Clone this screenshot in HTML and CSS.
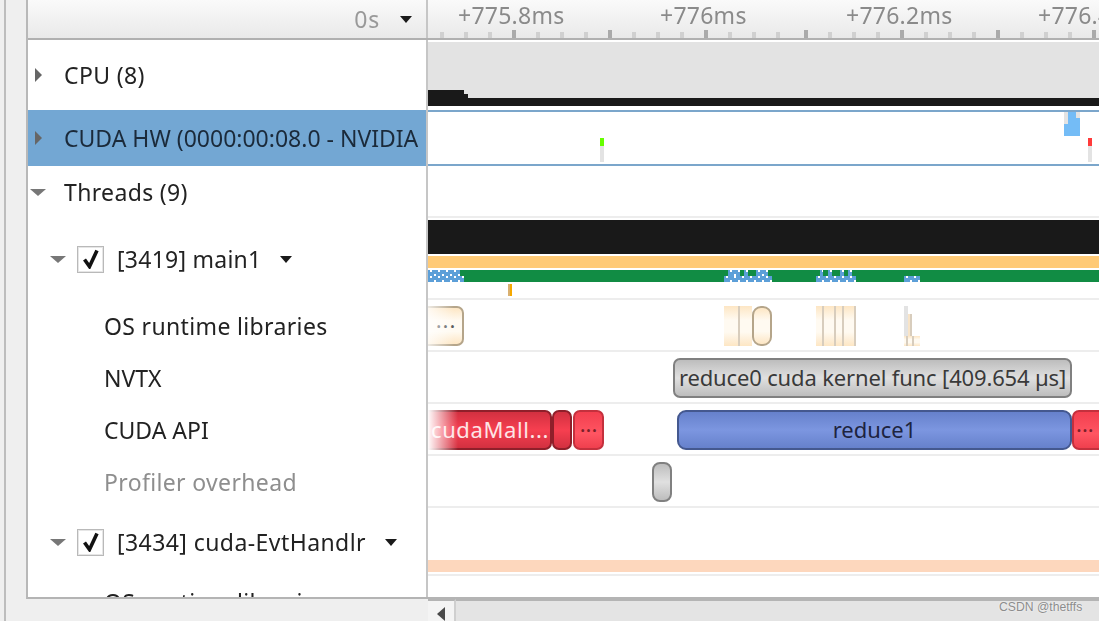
FILE: index.html
```html
<!DOCTYPE html>
<html>
<head>
<meta charset="utf-8">
<title>Timeline</title>
<link rel="stylesheet" href="styles.css">
</head>
<body>
<div class="app">
  <div class="rail"></div>
  <div class="main">
    <div class="panel">
      <div class="row row-head">
        <div class="label label-head"><span class="zero">0s</span><span class="arrow-down arrow-head"></span></div>
        <div class="track ruler">
          <span class="time t1">+775.8ms</span>
          <span class="time t2">+776ms</span>
          <span class="time t3">+776.2ms</span>
          <span class="time t4">+776.4ms</span>
          <svg class="ticks" width="671" height="38" viewBox="0 0 671 38">
            <path class="minor" d="M12 32h4v6h-4zM36 32h4v6h-4zM60 32h4v6h-4zM108 32h4v6h-4zM132 32h4v6h-4zM156 32h4v6h-4zM204 32h4v6h-4zM228 32h4v6h-4zM252 32h4v6h-4zM300 32h4v6h-4zM324 32h4v6h-4zM348 32h4v6h-4zM400 32h4v6h-4zM424 32h4v6h-4zM448 32h4v6h-4zM496 32h4v6h-4zM520 32h4v6h-4zM544 32h4v6h-4zM592 32h4v6h-4zM616 32h4v6h-4zM640 32h4v6h-4z"/>
            <path class="major" d="M84 30h4v8h-4zM180 30h4v8h-4zM276 30h4v8h-4zM376 30h4v8h-4zM472 30h4v8h-4zM568 30h4v8h-4zM664 30h4v8h-4z"/>
          </svg>
        </div>
      </div>

      <div class="row row-cpu">
        <div class="label indent-0"><span class="tri-right"></span><span class="name">CPU (8)</span></div>
        <div class="track track-cpu">
          <div class="cpu-load"><span class="cpu-step"></span></div>
        </div>
      </div>

      <div class="row row-hw">
        <div class="label indent-0 selected"><span class="tri-right"></span><span class="name caps">CUDA HW (0000:00:08.0 - NVIDIA</span></div>
        <div class="track track-hw">
          <span class="marker m-green"></span>
          <span class="marker m-red"></span>
          <span class="hw-a"></span><span class="hw-b"></span><span class="hw-c"></span><span class="hw-d"></span><span class="hw-e"></span>
        </div>
      </div>

      <div class="row row-threads">
        <div class="label indent-0"><span class="tri-down tri-threads"></span><span class="name">Threads (9)</span></div>
        <div class="track sep"></div>
      </div>

      <div class="row row-thread">
        <div class="label indent-1">
          <span class="tri-down"></span>
          <span class="check"><svg width="16" height="20" viewBox="0 0 16 20"><path d="M1.5 10.5 L6.5 17.5 L14 1.5" fill="none" stroke="#111" stroke-width="3.6"/></svg></span>
          <span class="name narrow">[3419] main1</span>
          <span class="arrow-down"></span>
        </div>
        <div class="track sep">
          <div class="band band-black"></div>
          <div class="band band-orange"></div>
          <div class="band band-green">
            <span class="dots d1"></span><span class="dots d2"></span>
            <span class="dots d3"></span><span class="dots d4"></span><span class="dots d5"></span><span class="dots d6"></span>
            <span class="dots d7"></span><span class="dots d8"></span><span class="dots d9"></span><span class="dots d10"></span><span class="dots d11"></span>
            <span class="dots d12"></span>
          </div>
          <span class="tick-orange"></span>
        </div>
      </div>

      <div class="row row-std">
        <div class="label indent-2"><span class="name">OS runtime libraries</span></div>
        <div class="track sep">
          <span class="ev cream ev-os1">···</span>
          <span class="block cream-flat b1"></span><span class="ev cream b2"></span>
          <span class="block cream-flat b3"></span>
          <span class="b4a"></span><span class="b4b"></span><span class="block cream-flat b4c"></span>
        </div>
      </div>

      <div class="row row-std">
        <div class="label indent-2"><span class="name caps">NVTX</span></div>
        <div class="track sep"><span class="ev gray ev-nvtx">reduce0 cuda kernel func [409.654 µs]</span></div>
      </div>

      <div class="row row-std">
        <div class="label indent-2"><span class="name caps">CUDA API</span></div>
        <div class="track sep">
          <span class="ev red ev-malloc">cudaMall...</span>
          <span class="ev red ev-r2"></span>
          <span class="ev red-light ev-r3">···</span>
          <span class="ev blue ev-reduce">reduce1</span>
          <span class="ev red-light ev-r4">···</span>
        </div>
      </div>

      <div class="row row-std">
        <div class="label indent-2 muted"><span class="name">Profiler overhead</span></div>
        <div class="track sep"><span class="ev gray ev-pill"></span></div>
      </div>

      <div class="row row-thread2">
        <div class="label indent-1">
          <span class="tri-down"></span>
          <span class="check"><svg width="16" height="20" viewBox="0 0 16 20"><path d="M1.5 10.5 L6.5 17.5 L14 1.5" fill="none" stroke="#111" stroke-width="3.6"/></svg></span>
          <span class="name wide">[3434] cuda-EvtHandlr</span>
          <span class="arrow-down"></span>
        </div>
        <div class="track sep"><div class="band-peach"></div></div>
      </div>

      <div class="row row-std">
        <div class="label indent-2"><span class="name">OS runtime libraries</span></div>
        <div class="track"></div>
      </div>
    </div>
    <div class="hscroll">
      <div class="sb-button"><span class="sb-arrow"></span></div>
      <div class="sb-track"></div>
    </div>
  </div>
</div>
<span class="watermark">CSDN @thetffs</span>
</body>
</html>
```
FILE: styles.css
```css
* { box-sizing: border-box; }
html, body { margin: 0; padding: 0; }
body {
  width: 1099px;
  height: 621px;
  overflow: hidden;
  position: relative;
  font-family: "Noto Sans", sans-serif;
  font-size: 23px;
  color: #222;
  background: #efefef;
}
.app { display: flex; width: 100%; height: 100%; }
.rail { width: 26px; margin-left: 0; border-left: 4px solid #efefef; position: relative; }
.rail::before { content: ""; display: block; width: 2px; height: 100%; background: #bdbdbd; }
.main { flex: 1; display: flex; flex-direction: column; min-width: 0; }
.panel {
  height: 600px;
  overflow: hidden;
  border-left: 2px solid #b8b8b8;
  border-bottom: 2px solid #b4b4b4;
  background: #fff;
}
.row { display: flex; }
.label {
  width: 400px;
  flex: none;
  display: flex;
  align-items: center;
  border-right: 2px solid #c6c6c6;
  white-space: nowrap;
  overflow: hidden;
}
.track { flex: 1; position: relative; overflow: hidden; background: #fff; }
.sep { border-bottom: 2px solid #ededed; }

.row-head { height: 40px; border-bottom: 2px solid #b0b0b0; background: linear-gradient(#fafafa, #e9e9e9); }
.label-head { justify-content: flex-end; padding-right: 14px; gap: 20px; }
.zero { color: #999; letter-spacing: 0.8px; filter: blur(0.35px); }
.ruler { background: none; }
.time { position: absolute; top: 0; line-height: 30px; color: #8a8a8a; white-space: nowrap; letter-spacing: 0.25px; filter: blur(0.35px); }
.t1 { left: 30px; } .t2 { left: 232px; } .t3 { left: 418px; } .t4 { left: 610px; }
.ticks { position: absolute; left: 0; top: 0; }
.minor { fill: #d0d0d0; }
.major { fill: #aaa; }

.row-cpu { height: 70px; }
.row-hw { height: 56px; }
.row-threads { height: 52px; }
.row-thread { height: 82px; }
.row-std { height: 52px; }
.row-thread2 { height: 68px; }

.indent-0 { padding-left: 7px; }
.indent-1 { padding-left: 22px; }
.indent-2 { padding-left: 76px; }
.name { display: block; letter-spacing: 0.35px; filter: blur(0.35px); }
.name.caps { letter-spacing: 0; }
.name.wide { letter-spacing: 0.43px; }
.name.narrow { letter-spacing: 0.25px; }
.indent-0 .name { margin-left: 22px; }
.muted { color: #8e8e8e; }
.selected { background: #73a7d3; width: 398px; margin-right: 2px; border-right: 0; color: #1b2a3a; }
.row-hw .label.selected { box-shadow: 2px 0 0 #c6c6c6; }

.tri-right { width: 0; height: 0; flex: none; border-style: solid; border-width: 7px 0 7px 7px; border-color: transparent transparent transparent #666; }
.tri-down { width: 0; height: 0; flex: none; border-style: solid; border-width: 7px 8px 0 8px; border-color: #777 transparent transparent transparent; }
.tri-threads { margin-left: -5px; }
.indent-0 .tri-threads + .name { margin-left: 18px; }
.arrow-down { width: 0; height: 0; flex: none; border-style: solid; border-width: 7px 6.5px 0 6.5px; border-color: #1a1a1a transparent transparent transparent; margin-left: 19px; }
.arrow-head { margin-left: 0; }
.check {
  width: 27px; height: 27px; margin-left: 11px; margin-right: 13px; flex: none;
  border: 1px solid #b9b9b9;
  box-shadow: inset 0 0 0 1px #e6e6e6;
  display: flex; align-items: center; justify-content: center;
  background: #fff;
}

.track-cpu { background: #fff; padding-top: 2px; }
.cpu-load { height: 64px; background: linear-gradient(#e3e3e3 56px, #191919 56px); position: relative; }
.cpu-step { position: absolute; left: 0; top: 48px; width: 36px; height: 8px; background: #191919; }
.cpu-step::after { content: ""; position: absolute; left: 36px; top: 4px; width: 4px; height: 4px; background: #191919; }

.track-hw { border-top: 2px solid #7ba6cb; border-bottom: 2px solid #7ba6cb; }
.marker { position: absolute; top: 26px; width: 4px; height: 24px; background: #e3e3e3; }
.marker::before { content: ""; display: block; height: 8px; background: inherit; }
.m-green { left: 172px; }
.m-green::before { background: #66ff00; }
.m-red { left: 660px; }
.m-red::before { background: #ff3b3b; }
.hw-a { position: absolute; left: 636px; top: 0; width: 4px; height: 12px; background: #e3e3e3; }
.hw-b { position: absolute; left: 640px; top: 0; width: 8px; height: 12px; background: #74bcf6; }
.hw-c { position: absolute; left: 648px; top: 0; width: 4px; height: 6px; background: #e3e3e3; }
.hw-d { position: absolute; left: 648px; top: 6px; width: 4px; height: 18px; background: #74bcf6; }
.hw-e { position: absolute; left: 636px; top: 12px; width: 16px; height: 12px; background: #74bcf6; }

.band { position: absolute; left: 0; right: 0; }
.band-black { top: 2px; height: 34px; background: #191919; }
.band-orange { top: 38px; height: 12px; background: #ffca76; }
.band-green { top: 52px; height: 12px; background: #118c44; }
.dots {
  position: absolute;
  background-color: #5c9fd8;
  background-image: radial-gradient(circle at 1px 1px, #fff 0.9px, transparent 1px), radial-gradient(circle at 1px 1px, #fff 0.9px, transparent 1px);
  background-size: 8px 8px, 8px 8px;
  background-position: 2px 0, 6px 4px;
}
.d1 { left: 0; top: 0; width: 32px; height: 6px; }
.d2 { left: 0; top: 6px; width: 36px; height: 6px; }
.d3 { left: 296px; top: 6px; width: 48px; height: 6px; }
.d4 { left: 300px; top: 0; width: 12px; height: 6px; }
.d5 { left: 316px; top: 0; width: 4px; height: 6px; }
.d6 { left: 328px; top: 0; width: 12px; height: 6px; }
.d7 { left: 388px; top: 6px; width: 40px; height: 6px; }
.d8 { left: 392px; top: 0; width: 3px; height: 6px; }
.d9 { left: 400px; top: 0; width: 4px; height: 6px; }
.d10 { left: 412px; top: 0; width: 4px; height: 6px; }
.d11 { left: 420px; top: 0; width: 4px; height: 6px; }
.d12 { left: 476px; top: 6px; width: 16px; height: 6px; }
.tick-orange { position: absolute; left: 80px; top: 66px; width: 4px; height: 12px; background: linear-gradient(90deg, #d9b070 50%, #f5a800 50%); }

.ev {
  position: absolute;
  top: 6px;
  height: 40px;
  border: 2px solid;
  border-radius: 7px;
  display: flex;
  align-items: center;
  justify-content: center;
  padding-bottom: 2px;
  white-space: nowrap;
  overflow: hidden;
  font-size: 22px;
}
.cream { border-color: #b5a58a; background: linear-gradient(#fde6c4, #fffaf1 35%, #fffaf1 65%, #fde6c4); color: #555; letter-spacing: 1px; }
.gray { border-color: #808080; background: linear-gradient(#bdbdbd, #e0e0e0 50%, #bdbdbd); color: #3a3a3a; }
.red { border-color: #8f1f2a; background: linear-gradient(#d23040, #f63f50 50%, #d23040); color: #fde4e6; }
.red-light { border-color: #c4303d; background: linear-gradient(#f33f4f, #ff5562 60%, #ef3f4e); color: #7a2029; }
.blue { border-color: #44588f; background: linear-gradient(#6681cc, #7c96e0 50%, #6681cc); color: #1d2440; }

.ev-os1 { left: -8px; width: 44px; padding-left: 8px; overflow: visible; }
.ev-os1::before { content: ""; position: absolute; inset: -2px auto -2px -2px; width: 34px; background: linear-gradient(90deg, #fff, rgba(255,255,255,0)); }
.block { position: absolute; top: 6px; height: 40px; }
.cream-flat { background-color: #fff; background-image: linear-gradient(#fde6c4, #fffaf1 35%, #fffaf1 65%, #fde6c4); }
.b1 { left: 296px; width: 28px; }
.b1::after { content: ""; position: absolute; left: 14px; top: 0; bottom: 0; width: 2px; background: #d8cdbd; }
.b2 { left: 324px; width: 20px; border-radius: 9px; }
.b3 { left: 388px; width: 40px; }
.b3::before { content: ""; position: absolute; left: 6px; top: 0; bottom: 0; width: 2px; background: #d8cdbd; box-shadow: 12px 0 0 #d8cdbd, 20px 0 0 #d8cdbd, 32px 0 0 #d8cdbd; }
.b4a { position: absolute; left: 476px; top: 6px; width: 4px; height: 30px; background: #e3e3e3; }
.b4b { position: absolute; left: 480px; top: 14px; width: 4px; height: 22px; background: linear-gradient(90deg, #f8e4c8 50%, #d8cdbd 50%); }
.b4c { left: 476px; top: 36px; width: 16px; height: 10px; }
.b4c::before { content: ""; position: absolute; left: 2px; top: 0; bottom: 0; width: 2px; background: #d8cdbd; box-shadow: 6px 0 0 #d8cdbd; }

.ev-nvtx { left: 245px; width: 399px; letter-spacing: -0.15px; }
.ev-malloc { left: -8px; width: 132px; padding-left: 8px; overflow: visible; letter-spacing: 0.6px; }
.ev-malloc::before { content: ""; position: absolute; inset: -2px auto -2px -2px; width: 38px; background: linear-gradient(90deg, rgba(255,255,255,1) 20%, rgba(255,255,255,0.75) 40%, rgba(255,255,255,0)); }
.ev-r2 { left: 124px; width: 20px; }
.ev-r3 { left: 145px; width: 31px; }
.ev-reduce { left: 249px; width: 395px; border-radius: 9px; }
.ev-r4 { left: 644px; width: 40px; justify-content: flex-start; padding-left: 2px; }
.ev-pill { left: 224px; width: 20px; border-radius: 8px; }

.band-peach { position: absolute; left: 0; right: 0; top: 52px; height: 12px; background: #fdd7bd; }

.hscroll { flex: 1; display: flex; padding-left: 402px; background: #efefef; }
.sb-button { width: 28px; display: flex; align-items: center; justify-content: center; padding-top: 6px; background: #f4f4f4; border-top: 2px solid #b4b4b4; border-right: 2px solid #cfcfcf; }
.sb-arrow { width: 0; height: 0; border-style: solid; border-width: 7px 8px 7px 0; border-color: transparent #4a4a4a transparent transparent; }
.sb-track { flex: 1; background: #e4e4e4; border-top: 2px solid #b4b4b4; }

.watermark { position: absolute; left: 999px; top: 599px; font-family: "Liberation Sans", sans-serif; font-size: 12.2px; line-height: 16px; color: #8c8c8c; text-shadow: 0 0 2px #fff; }
```
